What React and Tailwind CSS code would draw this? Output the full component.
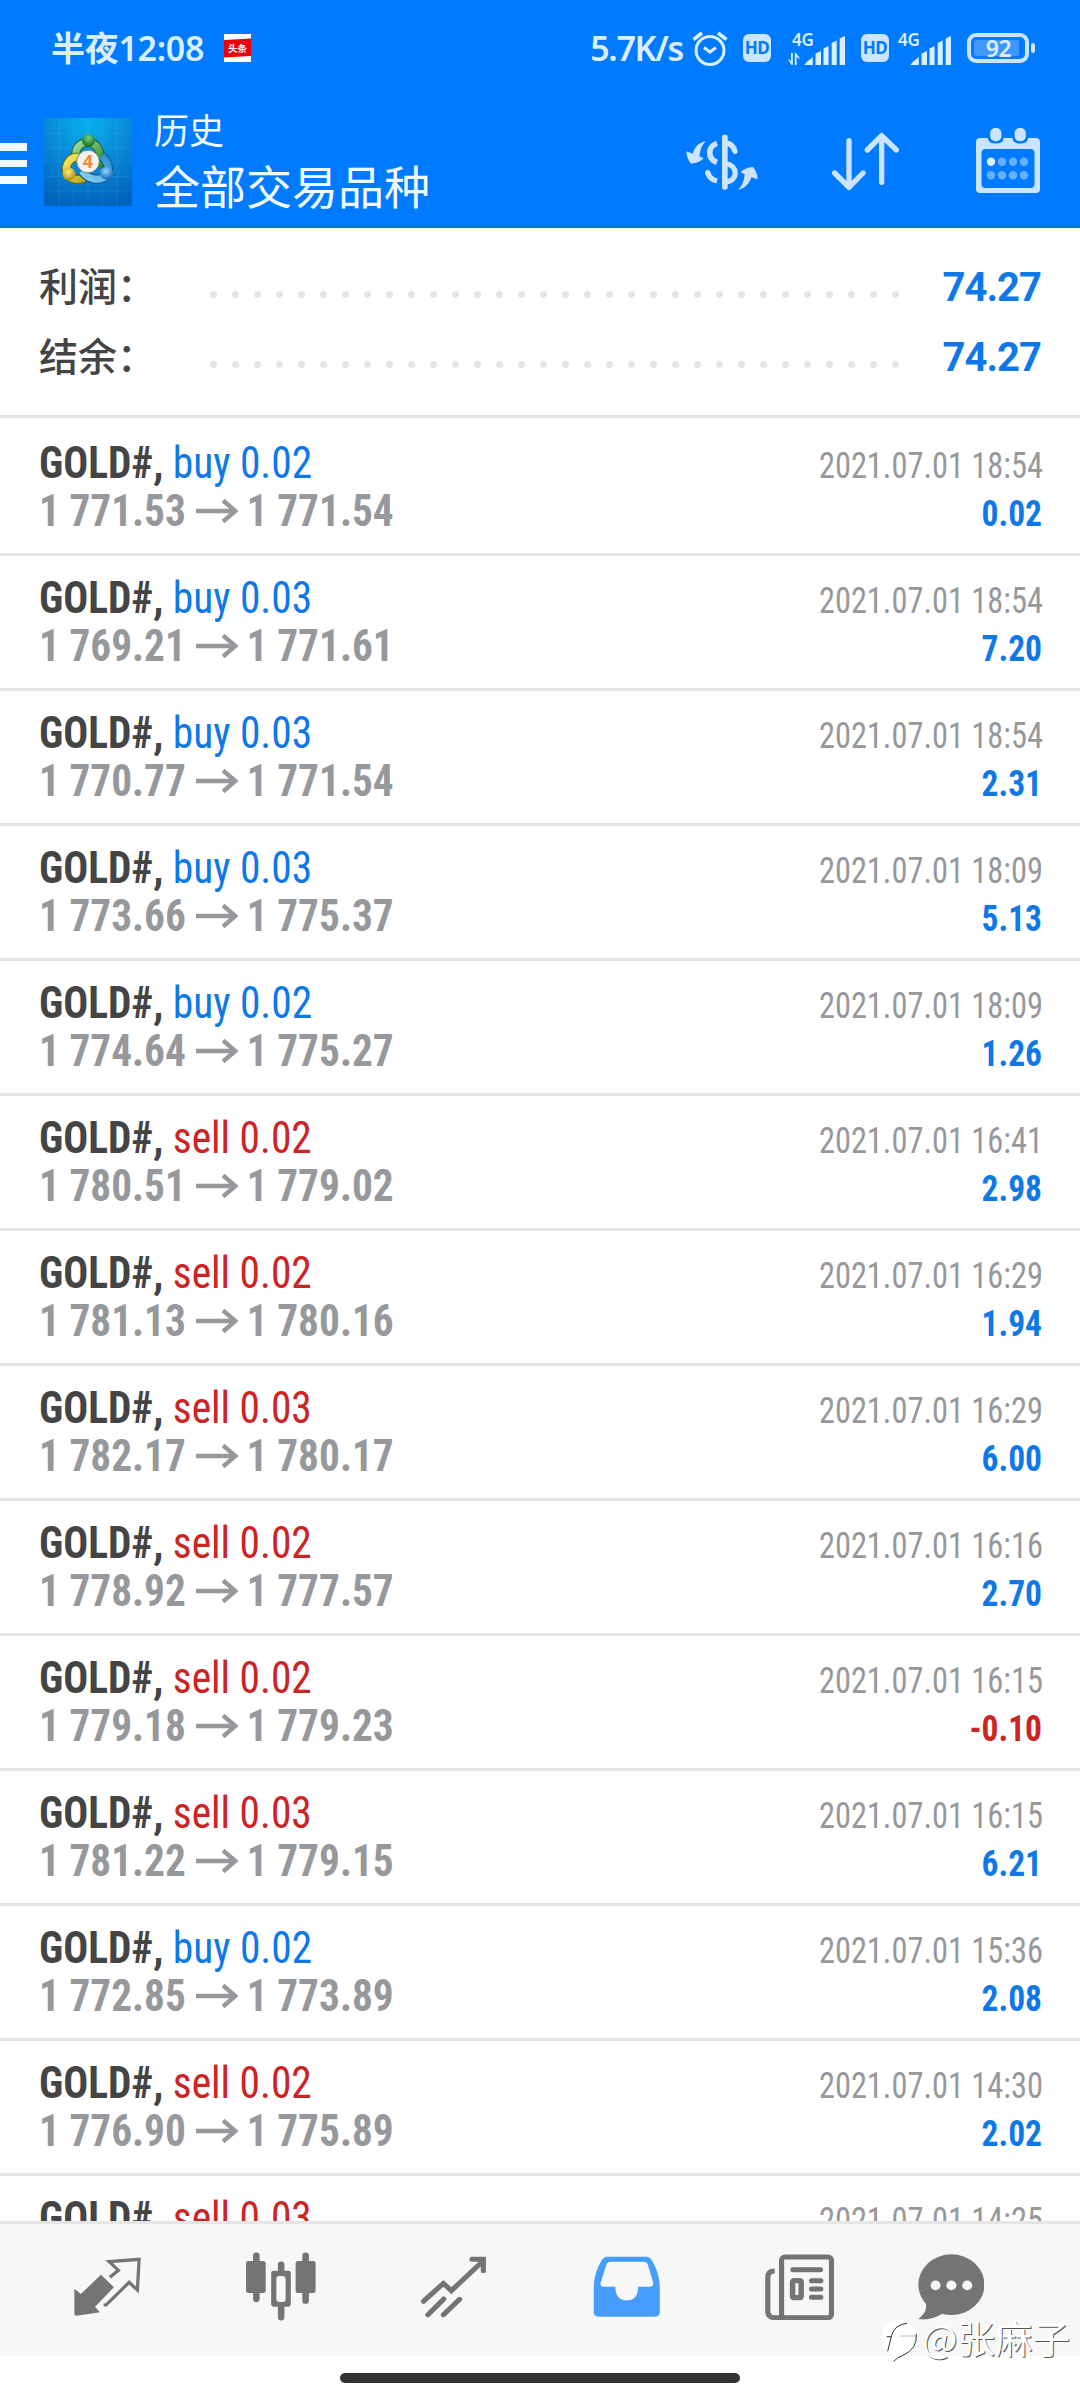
import React from "react";

const TRADES = [
  ["buy", "0.02", "1 771.53", "1 771.54", "2021.07.01 18:54", "0.02"],
  ["buy", "0.03", "1 769.21", "1 771.61", "2021.07.01 18:54", "7.20"],
  ["buy", "0.03", "1 770.77", "1 771.54", "2021.07.01 18:54", "2.31"],
  ["buy", "0.03", "1 773.66", "1 775.37", "2021.07.01 18:09", "5.13"],
  ["buy", "0.02", "1 774.64", "1 775.27", "2021.07.01 18:09", "1.26"],
  ["sell", "0.02", "1 780.51", "1 779.02", "2021.07.01 16:41", "2.98"],
  ["sell", "0.02", "1 781.13", "1 780.16", "2021.07.01 16:29", "1.94"],
  ["sell", "0.03", "1 782.17", "1 780.17", "2021.07.01 16:29", "6.00"],
  ["sell", "0.02", "1 778.92", "1 777.57", "2021.07.01 16:16", "2.70"],
  ["sell", "0.02", "1 779.18", "1 779.23", "2021.07.01 16:15", "-0.10"],
  ["sell", "0.03", "1 781.22", "1 779.15", "2021.07.01 16:15", "6.21"],
  ["buy", "0.02", "1 772.85", "1 773.89", "2021.07.01 15:36", "2.08"],
  ["sell", "0.02", "1 776.90", "1 775.89", "2021.07.01 14:30", "2.02"],
  ["sell", "0.03", null, null, "2021.07.01 14:25", null],
];

function StatusBar() {
  return (
    <div className="flex h-24 items-center pr-[45px] pl-[51px] text-[#d9efff]">
      <span className="text-[34px] leading-[48px] font-semibold tracking-[-0.3px] whitespace-nowrap">半夜12:08</span>
      <svg className="ml-[20px] shrink-0" width="27" height="28" viewBox="0 0 27 28">
        <rect width="27" height="28" fill="#fff" />
        <path d="M0 6 L27 4.500 V22 L0 23.500Z" fill="#e8000f" />
        <text x="4" y="18" fontSize="9.5" fontWeight="700" fill="#fff">头条</text>
      </svg>
      <div className="flex-1" />
      <span className="text-[34px] leading-[48px] font-semibold tracking-[-1.3px] whitespace-nowrap">5.7K/s</span>
      <svg className="ml-[9px] shrink-0" width="36" height="36" viewBox="0 0 36 36" fill="none" stroke="currentColor" strokeWidth="3">
        <circle cx="18" cy="20.500" r="14" />
        <path d="M1.500 9.500 L10 3 M34.500 9.500 L26 3" strokeWidth="3.5" />
        <path d="M12 17.500 L18 22 L24 17.500" />
      </svg>
      <Hd className="ml-[15px]" />
      <Signal className="ml-[17px]" arrows />
      <Hd className="ml-[15px]" />
      <Signal className="ml-[5px]" />
      <svg className="ml-[15px] shrink-0" width="68" height="30" viewBox="0 0 68 30">
        <rect x="2" y="2" width="58" height="26" rx="7" fill="none" stroke="#cce4ff" strokeWidth="4" />
        <rect x="7" y="7" width="45" height="16" rx="2" fill="#4098ff" />
        <rect x="64" y="10" width="4" height="10" rx="2" fill="#cce4ff" />
        <text x="31.500" y="23.500" textAnchor="middle" fontSize="23" fontWeight="600" fill="currentColor" letterSpacing="-0.5">92</text>
      </svg>
    </div>
  );
}

function Hd({ className }) {
  return (
    <span className={"flex h-7 w-7 shrink-0 items-center justify-center rounded-md bg-[#cce4ff] text-[17px] leading-7 font-bold tracking-[-0.5px] text-[#007aff] " + className}>
      HD
    </span>
  );
}

function Signal({ arrows, className }) {
  return (
    <svg className={"shrink-0 " + className} width="58" height="34" viewBox="0 -3 58 34" fill="currentColor">
      <text x="4" y="12" fontSize="17" fontWeight="600" letterSpacing="-0.3">4G</text>
      <path d="M16.500 31 Q17 29 24.800 23 V31Z M27.500 19.500 L33 17 V31 H27.500Z M35.500 14.500 L40.600 12 V31 H35.500Z M43.700 9 L48.700 6.500 V31 H43.700Z M51.700 4.500 L57 2 V31 H51.700Z" />
      {arrows && <path d="M0 25.500 H1.500 L3 27.500 V19 H4.800 V31 H3.500Z M6.800 19 H8 L12 24.500 H10.500 L8.600 22.500 V31 H6.800Z" />}
    </svg>
  );
}

function Logo() {
  return (
    <svg className="ml-[17px] shrink-0" width="88" height="88" viewBox="0 0 88 88">
      <defs>
        <radialGradient id="sky" cx="50%" cy="5%" r="100%">
          <stop offset="0" stopColor="#06b0ec" />
          <stop offset="0.5" stopColor="#0a86d6" />
          <stop offset="1" stopColor="#0062b8" />
        </radialGradient>
        <linearGradient id="green" x1="0" y1="0" x2="1" y2="1">
          <stop offset="0" stopColor="#a5dc96" />
          <stop offset="1" stopColor="#288a2c" />
        </linearGradient>
        <linearGradient id="gold" x1="0" y1="0" x2="1" y2="1">
          <stop offset="0" stopColor="#f4ea62" />
          <stop offset="1" stopColor="#b9a51d" />
        </linearGradient>
        <linearGradient id="blue" x1="1" y1="0" x2="0" y2="1">
          <stop offset="0" stopColor="#2e8fd2" />
          <stop offset="1" stopColor="#8dd0f6" />
        </linearGradient>
        <radialGradient id="greenBall" cx="50%" cy="30%" r="65%">
          <stop offset="0" stopColor="#7cd080" />
          <stop offset="1" stopColor="#14702a" />
        </radialGradient>
        <radialGradient id="goldBall" cx="45%" cy="35%" r="65%">
          <stop offset="0" stopColor="#fff27a" />
          <stop offset="1" stopColor="#a48a10" />
        </radialGradient>
        <radialGradient id="blueBall" cx="45%" cy="35%" r="65%">
          <stop offset="0" stopColor="#8fd8ff" />
          <stop offset="1" stopColor="#1668b4" />
        </radialGradient>
      </defs>
      <rect width="88" height="88" fill="url(#sky)" />
      <path d="M15 0V88 M29.500 0V88 M44 0V88 M58.500 0V88 M73 0V88 M0 15H88 M0 29.500H88 M0 44H88 M0 58.500H88 M0 73H88" stroke="#7cc8ff" strokeOpacity="0.12" />
      <g fill="none">
        <path d="M32 42 C30 30 36 24.500 44 24.500 C53 24.500 59 34 55 49" stroke="#17602a" strokeWidth="9" />
        <path d="M32 42 C30 30 36 24.500 44 24.500 C53 24.500 59 34 55 49" stroke="url(#green)" strokeWidth="7" />
        <path d="M34 39 C24 39 20 50 24 57 C29 63 40 63 44 56" stroke="#75690f" strokeWidth="9" />
        <path d="M34 39 C24 39 20 50 24 57 C29 63 40 63 44 56" stroke="url(#gold)" strokeWidth="7" />
        <path d="M58 38 C64 43 67 53 62 58 C55 64 43 61 38 53" stroke="#12568f" strokeWidth="9" />
        <path d="M58 38 C64 43 67 53 62 58 C55 64 43 61 38 53" stroke="url(#blue)" strokeWidth="7" />
      </g>
      <circle cx="44.500" cy="22.500" r="6.500" fill="url(#greenBall)" />
      <circle cx="25" cy="56" r="6.500" fill="url(#goldBall)" />
      <circle cx="62.500" cy="55" r="6.500" fill="url(#blueBall)" />
      <circle cx="44" cy="43.500" r="11.300" fill="#f4f2f0" stroke="#6d7a52" strokeWidth="0.8" />
      <text x="44" y="50" textAnchor="middle" fontSize="18" fontWeight="700" fill="#f0883a">4</text>
    </svg>
  );
}

function DollarIcon() {
  return (
    <svg width="76" height="60" viewBox="42 45 228 180" fill="none" stroke="#cce4ff">
      <path d="M164.500 61V210" strokeWidth="17" strokeLinecap="round" />
      <path d="M168 77 Q190 83 195 103" strokeWidth="16" strokeLinecap="round" />
      <path d="M168 140 C204 146 206 190 168 195" strokeWidth="16" />
      <path d="M141 79 C112 88 112 126 141 136" strokeWidth="17" />
      <path d="M141 192 Q118 186 113 166" strokeWidth="16" />
      <g fill="#cce4ff" stroke="none">
        <circle cx="113" cy="167" r="8" />
        <path d="M107 73 C88 76 74 90 68 110 L49 103 Q50 125 63 140 Q88 138 101 124 L88 118 C90 100 95 85 107 73Z" />
        <path d="M205 218 C224 215 238 201 244 181 L263 187 Q262 166 249 150 Q224 152 211 166 L224 172 C222 191 217 206 205 218Z" />
      </g>
    </svg>
  );
}

function SortIcon() {
  return (
    <svg className="ml-[71px]" width="68" height="62" viewBox="482 48 204 186" fill="none" stroke="#cce4ff" strokeWidth="16" strokeLinecap="round" strokeLinejoin="round">
      <path d="M536 77V216 M493 174L536 217L578 174 M634 202V63 M591 105L634 62L678 105" />
    </svg>
  );
}

function CalendarIcon() {
  return (
    <svg className="mb-[3px] ml-[77px]" width="64" height="66" viewBox="0 0 64 66">
      <path fillRule="evenodd" fill="#cce4ff" d="M4 10H60Q64 10 64 14V61Q64 65 60 65H4Q0 65 0 61V14Q0 10 4 10Z M9.500 21Q5.500 21 5.500 25V56Q5.500 60 9.500 60H54.500Q58.500 60 58.500 56V25Q58.500 21 54.500 21Z" />
      <path d="M12 9V11Q13 15.500 19.700 15.500Q26.500 15.500 27.500 11V9Z M36.500 9V11Q37.500 15.500 44.200 15.500Q51 15.500 52 11V9Z" fill="#007aff" />
      <rect x="14.200" y="0" width="11.200" height="13.200" rx="5" fill="#cce4ff" />
      <rect x="38.600" y="0" width="11.200" height="13.200" rx="5" fill="#cce4ff" />
      {[15, 26, 37, 48].map((x) => (
        <g key={x} fill="#66afff">
          <circle cx={x} cy="33.700" r="4.200" fill={x === 15 ? "#dff0ff" : "#66afff"} />
          <circle cx={x} cy="47.300" r="4.200" />
        </g>
      ))}
    </svg>
  );
}

function Header() {
  return (
    <header className="h-[228px] shrink-0 border-b-2 border-[#0870e0] bg-[#007aff]">
      <StatusBar />
      <div className="flex h-[132px] items-center pr-10">
        <div className="mt-[3px] flex w-[27px] flex-col gap-[9px]">
          <span className="h-[7.5px] bg-[#f0faff]" />
          <span className="h-[7.5px] bg-[#f0faff]" />
          <span className="h-[7.5px] bg-[#f0faff]" />
        </div>
        <Logo />
        <div className="mb-[7px] ml-[22px] flex flex-col gap-[10px] text-[#f0faff]">
          <span className="font-['Noto_Sans_CJK_SC',sans-serif] text-[35px] leading-[40px]">历史</span>
          <span className="font-['Noto_Sans_CJK_SC',sans-serif] text-[46px] leading-[50px]">全部交易品种</span>
        </div>
        <div className="flex-1" />
        <DollarIcon />
        <SortIcon />
        <CalendarIcon />
      </div>
    </header>
  );
}

function SummaryRow({ label, value }) {
  return (
    <div className="flex h-[70px] items-baseline leading-[70px]">
      <span className="w-[171px] text-[39px] font-medium text-[#444]">{label}</span>
      <span className="flex w-[689px] -translate-y-[3px] justify-between">
        {Array.from({ length: 32 }, (_, i) => (
          <i key={i} className="size-[7px] rounded-full bg-[#e5e5e5]" />
        ))}
      </span>
      <span className="flex-1 text-right text-[40px] font-bold tracking-[-1px] text-[#0f78e8]">{value}</span>
    </div>
  );
}

function Arrow() {
  return (
    <svg className="mr-[9px] ml-[11px]" width="45" height="24" viewBox="0 0 45 24" fill="none" stroke="currentColor" strokeWidth="4.600">
      <path d="M0 12H42 M29 1.500L42 12L29 22.500" />
    </svg>
  );
}

function Row({ trade, first }) {
  const [side, volume, open, close, time, profit] = trade;
  const color = side === "buy" ? "text-[#0f78e8]" : "text-[#cc2424]";
  const profitColor = profit && profit.startsWith("-") ? "text-[#cc2424]" : "text-[#0f78e8]";
  return (
    <div className={"shrink-0 border-t-3 border-[#e5e5e5] pr-[37.5px] pl-[38.5px] " + (first ? "h-[138px] pt-[21px]" : "h-[135px] pt-[18px]")}>
      <div className="flex h-12 items-baseline justify-between leading-[48px]">
        <span className="origin-left scale-x-[0.94] text-[44px] font-bold text-[#444]">
          GOLD#, <span className={"font-normal " + color}>{side} {volume}</span>
        </span>
        <span className="origin-right scale-x-[0.9] text-[36px] text-[#97989c]">{time}</span>
      </div>
      {open && (
        <div className="flex h-12 items-baseline justify-between leading-[48px] font-bold text-[#97989c]">
          <span className="flex origin-left scale-x-[0.939] items-center text-[44px]">
            {open}
            <Arrow />
            {close}
          </span>
          <span className={"origin-right scale-x-[0.93] text-[36px] " + profitColor}>{profit}</span>
        </div>
      )}
    </div>
  );
}

function NavIcon({ x, y, w, h, children }) {
  return (
    <svg width={w / 2.904} height={h / 3} viewBox={`${x} ${y} ${w} ${h}`} preserveAspectRatio="none" fill="#747474">
      {children}
    </svg>
  );
}

function BottomNav() {
  return (
    <nav className="grid h-[135px] shrink-0 grid-cols-[repeat(5,173px)_130px] place-items-center border-t-3 border-[#e5e5e5] bg-[#f7f7f7] pb-[6px] pl-[21px]">
      <NavIcon x={215} y={235} w={200} h={180}>
        <path d="M219 330 L238 346 L296 288 L334 326 L279 384 L293 401 L225 411 Q219 411 219 405Z" />
        <path d="M322 296 L347 275 L320 249 L407 242 L402 334 L378 311 L311 379 H304" fill="none" stroke="#747474" strokeWidth="9.500" />
      </NavIcon>
      <NavIcon x={712} y={220} w={208} h={208}>
        <path d="M745 231V361 M817 258V416 M888 231V366" stroke="#747474" strokeWidth="19" strokeLinecap="round" />
        <rect x="715" y="247" width="57" height="96" rx="7" />
        <rect x="859" y="247" width="58" height="96" rx="7" />
        <rect x="788" y="276" width="57" height="108" rx="7" />
        <rect x="803" y="292" width="27" height="78" rx="9" fill="#f7f7f7" />
      </NavIcon>
      <NavIcon x={1222} y={228} w={194} h={186}>
        <path d="M1232 364L1290 310L1313 332L1405 243 M1373 238H1406V272 M1245 404L1291 357 M1290 404L1337 358" fill="none" stroke="#747474" strokeWidth="15" strokeLinecap="round" />
      </NavIcon>
      <NavIcon x={156} y={229} w={196} h={184}>
        <path fill="#459dff" d="M196 231H312Q320 231 326 240Q350 280 350 325V398Q350 411 336 411H172Q158 411 158 398V325Q158 280 182 240Q188 231 196 231Z" />
        <path fill="#f7f7f7" d="M208 246H302Q312 246 315 254L331 310Q332 320 322 321H287Q287 362 254 362Q221 362 221 321H187Q176 320 178 310L195 254Q198 246 208 246Z" />
      </NavIcon>
      <NavIcon x={655} y={221} w={206} h={200}>
        <g fill="none" stroke="#747474" strokeWidth="15" strokeLinecap="round">
          <rect x="706" y="230" width="145" height="182" rx="10" />
          <path d="M686 272Q666 272 666 292V392Q666 412 686 412H710" strokeLinecap="butt" />
          <path d="M739 268H819 M793 301H820 M793 326H820 M793 351H820" />
          <rect x="738" y="301" width="25" height="51" rx="4" strokeWidth="16" />
        </g>
      </NavIcon>
      <NavIcon x={1102} y={221} w={194} h={200}>
        <ellipse cx="1199" cy="313" rx="96" ry="91" />
        <path d="M1124 365Q1132 394 1103 416Q1140 422 1175 399Z" />
        <g fill="#f7f7f7">
          <circle cx="1153" cy="315" r="14.500" />
          <circle cx="1199" cy="315" r="14.500" />
          <circle cx="1245" cy="315" r="14.500" />
        </g>
      </NavIcon>
    </nav>
  );
}

function Watermark() {
  return (
    <div className="absolute top-[2311px] right-[10px] flex items-center">
      <svg className="mt-[7px]" width="38" height="44" viewBox="62 58 114 132" fill="none">
        <circle cx="117" cy="118" r="54" fill="#fff" />
        <path d="M82 158 L94 110 Q102 78 140 74 M79 114H92 M168 106Q172 150 128 170 Q110 176 100 188" stroke="#333" strokeWidth="3" />
        <path d="M120 112H168" stroke="#999" strokeWidth="2" />
      </svg>
      <span className="ml-[3px] font-['Noto_Sans_CJK_SC',sans-serif] text-[37.5px] leading-[50px] font-normal text-white [text-shadow:1px_1px_0_#555]">
        @张麻子
      </span>
    </div>
  );
}

export default function App() {
  return (
    <div className="relative flex h-[2400px] w-[1080px] flex-col overflow-hidden bg-white font-['Noto_Sans','Noto_Sans_CJK_SC',sans-serif]">
      <Header />
      <section className="h-[187px] shrink-0 pt-[25px] pr-[39px] pl-[39px] font-['Roboto','Noto_Sans_CJK_SC',sans-serif]">
        <SummaryRow label="利润：" value="74.27" />
        <SummaryRow label="结余：" value="74.27" />
      </section>
      <main className="flex h-[1806px] shrink-0 flex-col overflow-hidden font-['Roboto',sans-serif] whitespace-nowrap [font-stretch:75%]">
        {TRADES.map((t, i) => (
          <Row key={i} trade={t} first={i === 0} />
        ))}
      </main>
      <BottomNav />
      <div className="flex flex-1 justify-center pt-[17px]">
        <div className="h-[10px] w-[400px] rounded-full bg-[#333]" />
      </div>
      <Watermark />
    </div>
  );
}
